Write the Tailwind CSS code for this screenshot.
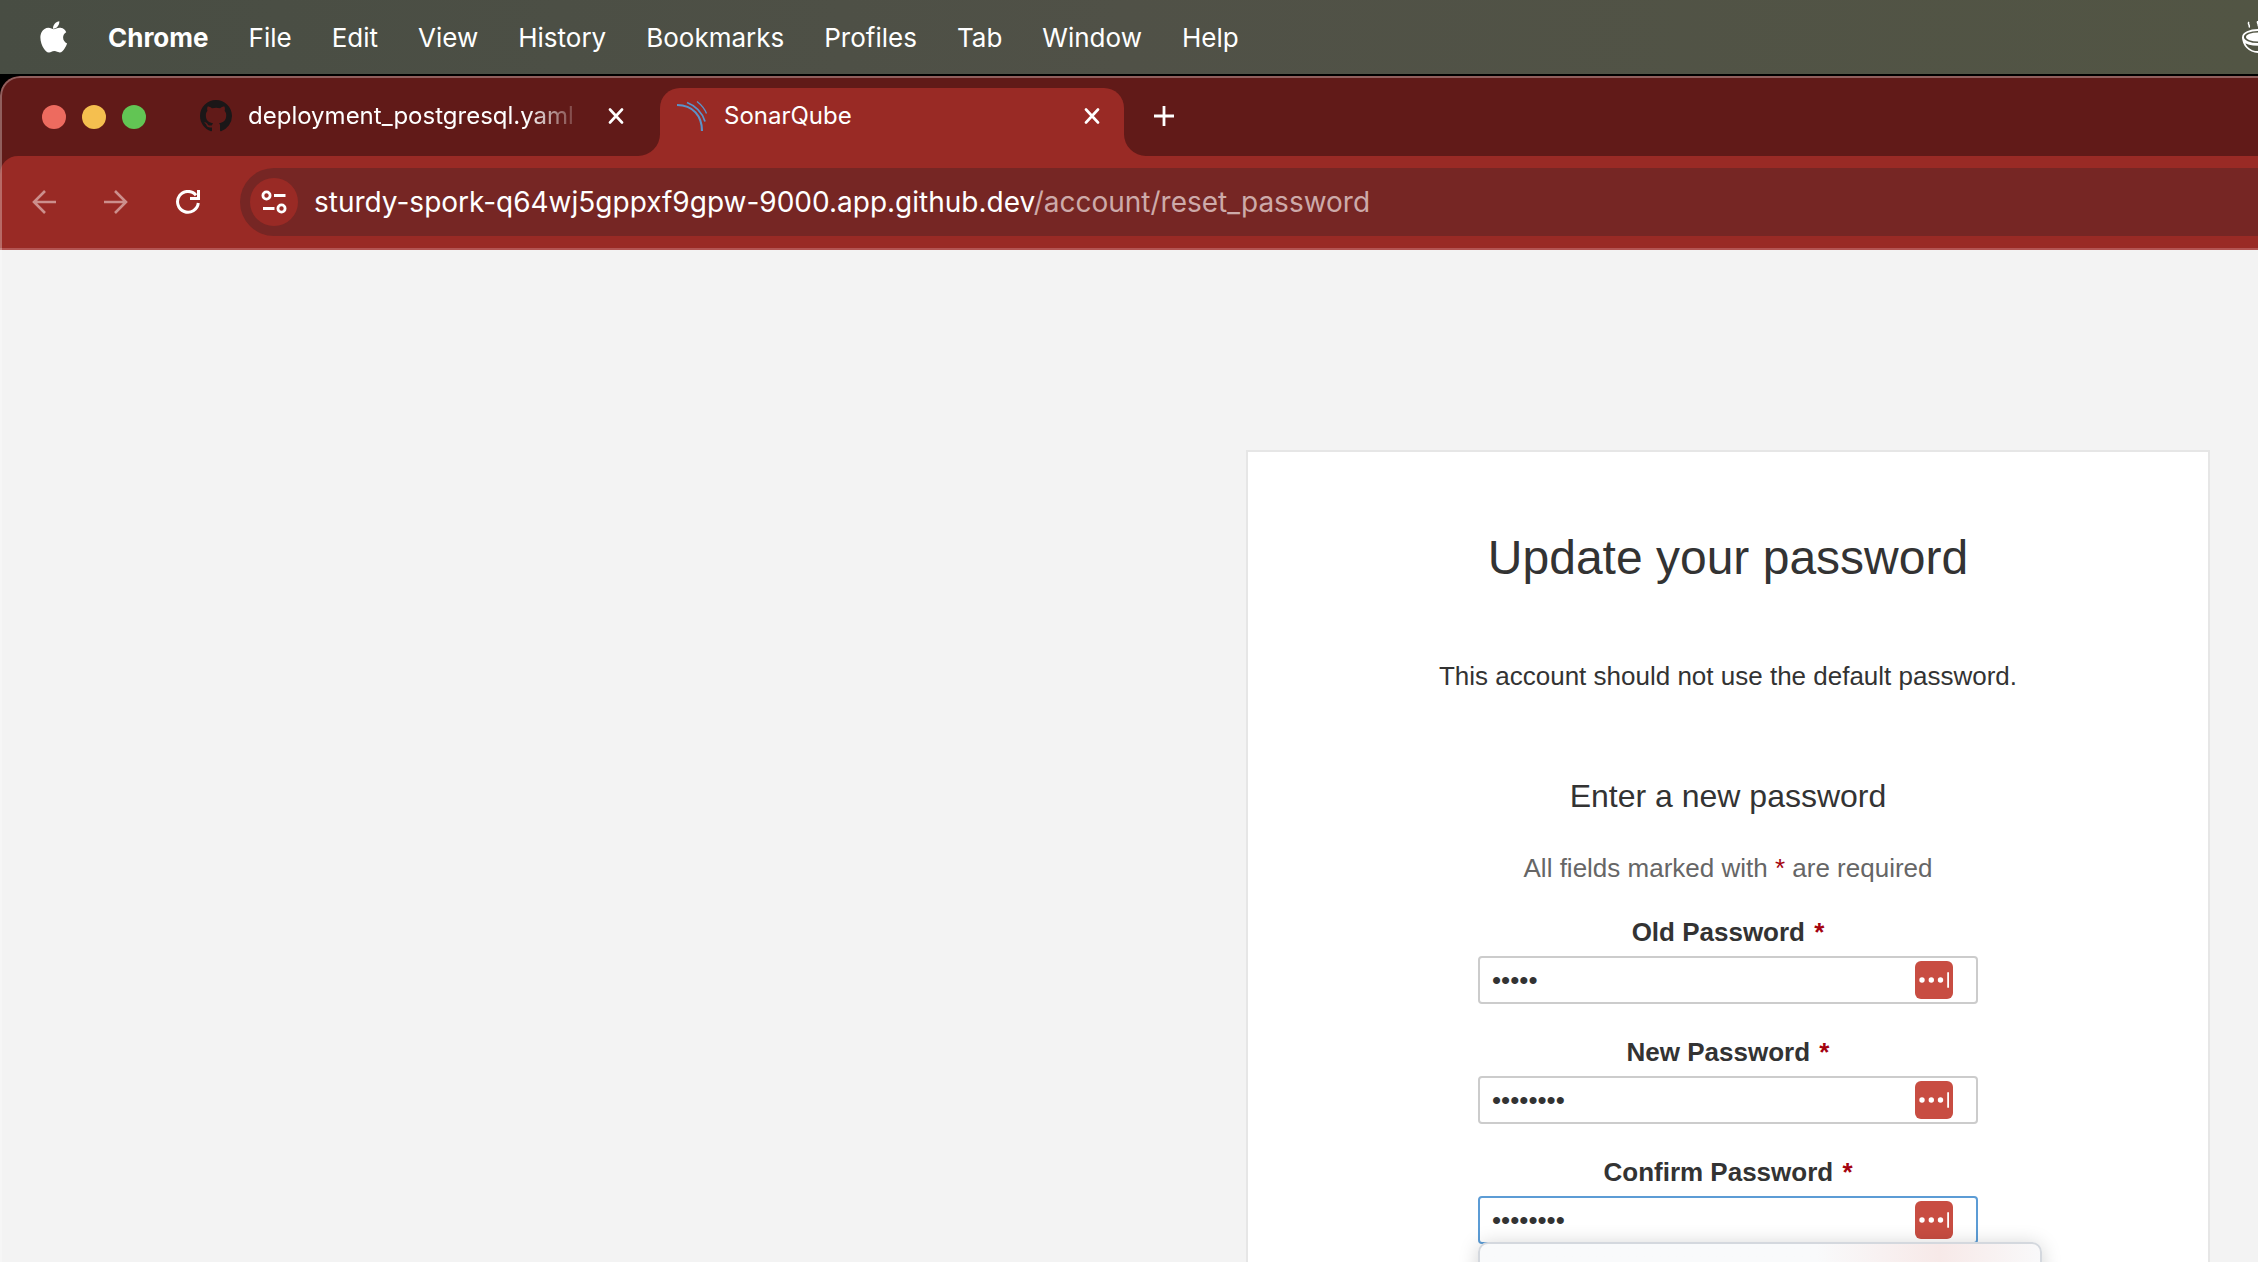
<!DOCTYPE html>
<html lang="en">
<head>
<meta charset="utf-8">
<title>SonarQube</title>
<script src="https://cdn.jsdelivr.net/npm/@tailwindcss/browser@4"></script>
</head>
<body class="flex h-screen flex-col overflow-hidden bg-black font-['Inter',sans-serif] text-white">

  <!-- macOS menu bar -->
  <nav aria-label="Menu bar" class="flex h-[74px] shrink-0 items-center bg-linear-to-r from-[#484d43] via-[#505147] to-[#525544] pl-10 text-[26px] text-shadow-md">
    <button aria-label="Apple menu" class="mr-10 w-7">
      <svg viewBox="0 0 27 32" class="h-8 w-7" fill="currentColor"><path d="M18.800 0.300C19 2.300 18.200 4.200 17.100 5.500 16 6.900 14.200 7.900 12.500 7.700 12.300 5.800 13.200 3.900 14.200 2.700 15.400 1.400 17.300 0.400 18.800 0.300ZM25.700 11.200C23.700 12.400 22.600 14.200 22.600 16.600 22.600 19.300 24.200 21.500 26.600 22.400 26 24.100 25.200 25.800 24.100 27.400 22.700 29.400 21.300 31.400 19.100 31.400 16.900 31.400 16.300 30.100 13.800 30.100 11.300 30.100 10.600 31.400 8.500 31.500 6.300 31.600 4.700 29.400 3.300 27.400 0.500 23.300-1.600 15.800 1.200 10.900 2.600 8.400 5.200 6.900 7.900 6.800 10.100 6.800 12.100 8.300 13.400 8.300 14.700 8.300 17.100 6.500 19.700 6.800 20.800 6.800 23.900 7.200 25.700 11.200Z"/></svg>
    </button>
    <div class="flex items-center gap-10">
      <button class="font-bold">Chrome</button>
      <button>File</button>
      <button>Edit</button>
      <button>View</button>
      <button>History</button>
      <button>Bookmarks</button>
      <button>Profiles</button>
      <button>Tab</button>
      <button>Window</button>
      <button>Help</button>
    </div>
    <button aria-label="Bowl" class="ml-auto w-4 overflow-hidden">
      <svg viewBox="0 0 32 32" class="h-8 w-8" fill="none" stroke="currentColor" stroke-width="1.800"><ellipse cx="16" cy="16" rx="15" ry="7"/><ellipse cx="16" cy="16" rx="12" ry="4.500" fill="currentColor" stroke="none"/><path d="M1 16C1 24 7 31 16 31S31 24 31 16M2 20C7 25 25 25 30 20"/><path d="M7 1c-2 2 1.500 3 0 5.500M16 0c-2 2 1.500 3 0 5.500" stroke-width="1.500"/></svg>
    </button>
  </nav>

  <div class="relative mt-0.5 flex min-h-0 flex-1 flex-col overflow-hidden rounded-tl-[20px] bg-[#611a18]">

    <!-- Translucent rim of the window -->
    <div class="pointer-events-none absolute inset-0 z-10 rounded-tl-[20px] border-t-2 border-l-2 border-white/30"></div>

    <!-- Tab strip -->
    <div class="flex h-20 shrink-0 items-start pt-0.5">
      <div class="flex h-[78px] w-[196px] shrink-0 items-center gap-4 pl-[42px]">
        <button aria-label="Close window" class="size-6 rounded-full bg-[#ed6b5f]"></button>
        <button aria-label="Minimize window" class="size-6 rounded-full bg-[#f5bf4f]"></button>
        <button aria-label="Zoom window" class="size-6 rounded-full bg-[#62c554]"></button>
      </div>
      <div class="flex h-[76px] w-[442px] shrink-0 items-center pl-1">
        <svg viewBox="0 0 16 16" class="size-8 shrink-0" fill="#1b1718"><path d="M8 0C3.580 0 0 3.580 0 8c0 3.540 2.290 6.530 5.470 7.590.4.070.55-.17.550-.38 0-.19-.01-.82-.01-1.490-2.010.37-2.530-.49-2.690-.94-.09-.23-.48-.94-.82-1.130-.28-.15-.68-.52-.01-.53.630-.01 1.080.58 1.230.82.720 1.210 1.870.87 2.330.66.070-.52.280-.87.510-1.070-1.780-.2-3.640-.89-3.640-3.950 0-.87.310-1.590.82-2.150-.08-.2-.36-1.020.08-2.120 0 0 .67-.21 2.200.82.640-.18 1.320-.27 2-.27s1.360.09 2 .27c1.530-1.040 2.200-.82 2.200-.82.440 1.100.16 1.920.08 2.120.51.560.82 1.270.82 2.150 0 3.070-1.870 3.750-3.650 3.950.29.250.54.730.54 1.480 0 1.070-.01 1.930-.01 2.200 0 .21.150.46.550.38A8.010 8.010 0 0 0 16 8c0-4.420-3.580-8-8-8z"/></svg>
        <a href="#" class="ml-4 w-[336px] overflow-hidden mask-r-from-83% mask-r-to-100% text-[24px] whitespace-nowrap text-white">deployment_postgresql.yaml</a>
        <button aria-label="Close tab" class="ml-6 size-4">
          <svg viewBox="0 0 16 16" class="size-4" stroke="currentColor" stroke-width="2.600" stroke-linecap="round"><path d="M2 1.500l12 13M14 1.500l-12 13"/></svg>
        </button>
      </div>
      <svg viewBox="0 0 22 22" class="size-[22px] shrink-0 self-end" fill="#992a25"><path d="M22 0v22H0A22 22 0 0 0 22 0Z"/></svg>
      <div class="mt-2.5 flex h-[68px] w-[464px] shrink-0 items-start rounded-t-[20px] bg-[#992a25] pt-3 pr-6 pl-4">
        <svg viewBox="0 0 32 32" class="size-8 shrink-0" fill="none" stroke="#5b93c9"><path d="M1 5C17 5 26 16 26 31" stroke-width="2.200"/><path d="M11 2.500C20 6 26 12 29 21.500" stroke-width="1.800"/><path d="M21 1.500C25.500 5 28.500 8.500 30.500 13.500" stroke-width="1.400"/></svg>
        <a href="#" class="ml-4 text-[24px] leading-8 text-white">SonarQube</a>
        <button aria-label="Close tab" class="mt-2 ml-auto size-4">
          <svg viewBox="0 0 16 16" class="size-4" stroke="currentColor" stroke-width="2.600" stroke-linecap="round"><path d="M2 1.500l12 13M14 1.500l-12 13"/></svg>
        </button>
      </div>
      <svg viewBox="0 0 22 22" class="size-[22px] shrink-0 self-end" fill="#992a25"><path d="M0 0v22H22A22 22 0 0 1 0 0Z"/></svg>
      <button aria-label="New tab" class="mt-7 ml-2 size-5">
        <svg viewBox="0 0 20 20" class="size-5" stroke="currentColor" stroke-width="2.800"><path d="M10 0v20M0 10h20"/></svg>
      </button>
    </div>

    <!-- Toolbar -->
    <div class="flex h-[94px] shrink-0 items-center rounded-tl-[18px] border-b-2 border-[#b35553] bg-[#992a25]">
      <button aria-label="Back" class="ml-8 size-6 text-[#cc8f8c]">
        <svg viewBox="0 0 24 24" class="size-6" fill="none" stroke="currentColor" stroke-width="2.600"><path d="M24 12H2M13 1L2 12l11 11"/></svg>
      </button>
      <button aria-label="Forward" class="ml-12 size-6 text-[#cc8f8c]">
        <svg viewBox="0 0 24 24" class="size-6" fill="none" stroke="currentColor" stroke-width="2.600"><path d="M0 12h22M11 1l11 11-11 11"/></svg>
      </button>
      <button aria-label="Reload" class="ml-12 size-6">
        <svg viewBox="0 0 24 24" class="size-6" fill="none" stroke="currentColor" stroke-width="3"><path d="M22.300 13A10.400 10.400 0 1 1 20 5.200"/><path d="M22.500 0v8.500H14"/></svg>
      </button>
      <div class="ml-10 flex h-[68px] min-w-0 flex-1 items-center rounded-l-full bg-[#762624] pl-2.5">
        <button aria-label="View site information" class="flex size-12 shrink-0 items-center justify-center rounded-full bg-[#992a25]">
          <svg viewBox="0 0 26 24" class="h-6 w-[26px]" fill="none" stroke="currentColor" stroke-width="2.800"><circle cx="5.500" cy="5.500" r="3.600"/><path d="M13 5.500h11.500M2 18.500h11.500"/><circle cx="20.500" cy="18.500" r="3.600"/></svg>
        </button>
        <a href="#" aria-label="Address" class="ml-4 text-[28px] whitespace-nowrap"><span class="text-white">sturdy-spork-q64wj5gppxf9gpw-9000.app.github.dev</span><span class="text-[#cdaaa9]">/account/reset_password</span></a>
      </div>
    </div>

    <!-- Page -->
    <main class="flex min-h-0 flex-1 justify-end bg-[#f3f3f3] pt-50 pr-12 font-['Liberation_Sans',Arial,sans-serif] text-[26px] text-[#333333]">
      <section class="h-fit w-[964px] border-2 border-[#e6e6e6] bg-white pt-[76px] pb-16 text-center">
        <h1 class="text-[48px] leading-[60px]">Update your password</h1>
        <p class="mt-17 leading-10">This account should not use the default password.</p>
        <form class="mx-auto mt-20 w-[500px]">
          <h2 class="text-[32px] leading-10">Enter a new password</h2>
          <p class="mt-8 leading-10 text-[#666666]">All fields marked with <span class="text-[#a4030f]">*</span> are required</p>

          <div class="mt-7 flex flex-col gap-8">
            <div>
              <label for="old" class="block leading-8 font-bold">Old Password <span class="ml-0.5 text-[#a4030f]">*</span></label>
              <div class="relative mt-2">
                <input id="old" type="password" value="admin" class="block h-12 w-full rounded-sm border-2 border-[#cccccc] bg-white px-3 outline-none">
                <svg viewBox="0 0 38 38" class="absolute top-[5px] right-[25px] size-[38px]"><rect width="38" height="38" rx="6" fill="#c84d42"/><g fill="#fff"><circle cx="7" cy="19" r="2.700"/><circle cx="16.300" cy="19" r="2.700"/><circle cx="25.500" cy="19" r="2.700"/><rect x="32.200" y="11" width="1.800" height="16" rx=".900"/></g></svg>
              </div>
            </div>
            <div>
              <label for="new" class="block leading-8 font-bold">New Password <span class="ml-0.5 text-[#a4030f]">*</span></label>
              <div class="relative mt-2">
                <input id="new" type="password" value="password" class="block h-12 w-full rounded-sm border-2 border-[#cccccc] bg-white px-3 outline-none">
                <svg viewBox="0 0 38 38" class="absolute top-[5px] right-[25px] size-[38px]"><rect width="38" height="38" rx="6" fill="#c84d42"/><g fill="#fff"><circle cx="7" cy="19" r="2.700"/><circle cx="16.300" cy="19" r="2.700"/><circle cx="25.500" cy="19" r="2.700"/><rect x="32.200" y="11" width="1.800" height="16" rx=".900"/></g></svg>
              </div>
            </div>
            <div>
              <label for="confirm" class="block leading-8 font-bold">Confirm Password <span class="ml-0.5 text-[#a4030f]">*</span></label>
              <div class="relative mt-2">
                <input id="confirm" type="password" value="password" class="block h-12 w-full rounded-sm border-2 border-[#5c9cd5] bg-white px-3 outline-none">
                <svg viewBox="0 0 38 38" class="absolute top-[5px] right-[25px] size-[38px]"><rect width="38" height="38" rx="6" fill="#c84d42"/><g fill="#fff"><circle cx="7" cy="19" r="2.700"/><circle cx="16.300" cy="19" r="2.700"/><circle cx="25.500" cy="19" r="2.700"/><rect x="32.200" y="11" width="1.800" height="16" rx=".900"/></g></svg>
                <!-- Password manager menu opening under the focused field -->
                <div class="absolute top-[46px] left-0 h-60 w-[564px] rounded-[10px] border-2 border-[#d4d8de] bg-linear-to-r from-[#f9fafb] from-60% via-[#f7e9e8] via-82% to-[#f9f9fa] shadow-[0_2px_20px_rgba(0,0,0,0.18)]"></div>
              </div>
            </div>
          </div>
        </form>
      </section>
    </main>
  </div>
</body>
</html>
